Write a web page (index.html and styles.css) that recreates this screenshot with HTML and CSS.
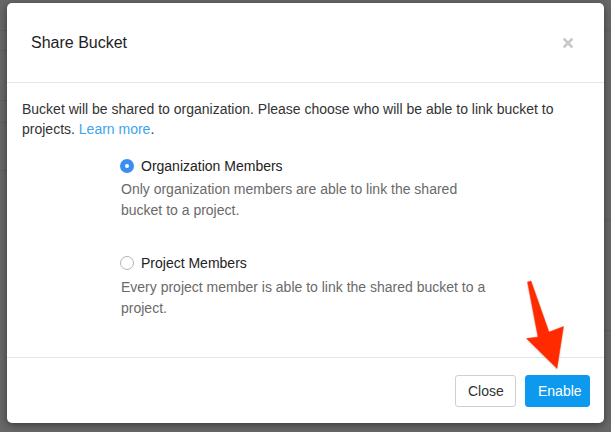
FILE: index.html
```html
<!DOCTYPE html>
<html>
<head>
<meta charset="utf-8">
<link rel="stylesheet" href="styles.css">
</head>
<body>
<div class="backdrop">
  <div class="modal">
    <div class="modal-header">
      <h4 class="modal-title">Share Bucket</h4>
      <span class="close" aria-label="Close">
        <svg width="10" height="10" viewBox="0 0 10 10"><path d="M1.5 1.5 L8.5 8.5 M8.5 1.5 L1.5 8.5" stroke="#c8c8c8" stroke-width="2.6" stroke-linecap="square"/></svg>
      </span>
    </div>
    <div class="modal-body">
      <p class="intro">Bucket will be shared to organization. Please choose who will be able to link bucket to projects. <a class="link" href="#">Learn more</a>.</p>
      <div class="options">
        <div class="option">
          <div class="option-label"><span class="radio checked"></span><span>Organization Members</span></div>
          <p class="option-desc">Only organization members are able to link the shared bucket to a project.</p>
        </div>
        <div class="option second">
          <div class="option-label"><span class="radio"></span><span>Project Members</span></div>
          <p class="option-desc">Every project member is able to link the shared bucket to a project.</p>
        </div>
      </div>
    </div>
    <div class="modal-footer">
      <button class="btn btn-default">Close</button>
      <button class="btn btn-primary">Enable</button>
    </div>
  </div>
  <svg class="arrow" width="611" height="432" viewBox="0 0 611 432">
    <polygon points="527.5,282 531,281 549,332 563.5,326.5 557,368.5 526.5,338.5 538,337" fill="#ff2a00" stroke="#ff3300" stroke-width="0.5" stroke-linejoin="round"/>
  </svg>
</div>
</body>
</html>
```
FILE: styles.css
```css
* { box-sizing: border-box; }
html, body { margin: 0; padding: 0; }
body {
  width: 611px;
  height: 432px;
  background: #686868;
  font-family: "Liberation Sans", Arial, Helvetica, sans-serif;
  color: #333;
  overflow: hidden;
}
.backdrop {
  position: relative;
  width: 611px;
  height: 432px;
  padding: 3px 7px 0 7px;
  background:
    linear-gradient(#5f5f5f, #5f5f5f) 0 30px / 8px 1px no-repeat,
    linear-gradient(#5f5f5f, #5f5f5f) 0 50px / 8px 1px no-repeat,
    linear-gradient(#5f5f5f, #5f5f5f) 0 100px / 8px 1px no-repeat,
    linear-gradient(#5f5f5f, #5f5f5f) 0 122px / 8px 1px no-repeat,
    linear-gradient(#5f5f5f, #5f5f5f) 0 170px / 8px 1px no-repeat,
    linear-gradient(#5f5f5f, #5f5f5f) 603px 30px / 8px 1px no-repeat,
    linear-gradient(#5f5f5f, #5f5f5f) 603px 220px / 8px 1px no-repeat,
    linear-gradient(#5f5f5f, #5f5f5f) 603px 330px / 8px 1px no-repeat,
    #686868;
}
.modal {
  width: 597px;
  height: 420px;
  background: #fff;
  border-radius: 5px;
  box-shadow: 0 2px 8px rgba(0,0,0,0.45);
  display: flex;
  flex-direction: column;
}
.modal-header {
  height: 80px;
  display: flex;
  align-items: center;
  justify-content: space-between;
  padding: 0 31px 0 24px;
  border-bottom: 1px solid #e5e5e5;
}
.modal-title {
  margin: 0;
  font-size: 16px;
  font-weight: normal;
  line-height: 22px;
  color: #1e1e24;
  padding-top: 1px;
}
.close {
  display: flex;
  width: 10px;
  height: 10px;
}
.modal-body {
  flex: 1;
  padding: 16px 15px 0 15px;
  border-bottom: 1px solid #e5e5e5;
}
.intro {
  margin: 0;
  font-size: 14px;
  line-height: 20px;
  color: #333;
}
.link { color: #3ba6ef; text-decoration: none; }
.options {
  display: flex;
  flex-direction: column;
  padding-left: 98px;
  margin-top: 17px;
}
.option.second { margin-top: 32px; }
.option-label {
  display: flex;
  align-items: center;
  gap: 7px;
  font-size: 14px;
  line-height: 20px;
  color: #222;
}
.radio {
  width: 14px;
  height: 14px;
  border-radius: 50%;
  border: 1px solid #b5b5b5;
  background: #fff;
  flex: none;
}
.radio.checked {
  border: none;
  background: #3b8ef0;
  display: flex;
  align-items: center;
  justify-content: center;
}
.radio.checked::after {
  content: "";
  width: 4px;
  height: 4px;
  border-radius: 50%;
  background: #fff;
}
.option-desc {
  margin: 3px 0 0 1px;
  max-width: 372px;
  font-size: 14px;
  line-height: 21px;
  color: #6a6a6a;
}
.option.second .option-desc { margin-top: 4px; }
.modal-footer {
  height: 65px;
  display: flex;
  align-items: center;
  justify-content: flex-end;
  gap: 9px;
  padding: 0 14px 0 15px;
}
.btn {
  height: 32px;
  font-family: "Liberation Sans", Arial, Helvetica, sans-serif;
  font-size: 14px;
  border-radius: 3px;
  padding: 0 12px;
  cursor: pointer;
}
.btn-default {
  width: 61px;
  background: #fff;
  border: 1px solid #cfcfcf;
  color: #333;
}
.btn-primary {
  width: 65px;
  background: #0d9aee;
  border: 1px solid #0d9aee;
  color: #fff;
}
.arrow {
  position: absolute;
  left: 0;
  top: 0;
  pointer-events: none;
  filter: drop-shadow(0 1px 1px rgba(0,0,0,0.15));
}
```
